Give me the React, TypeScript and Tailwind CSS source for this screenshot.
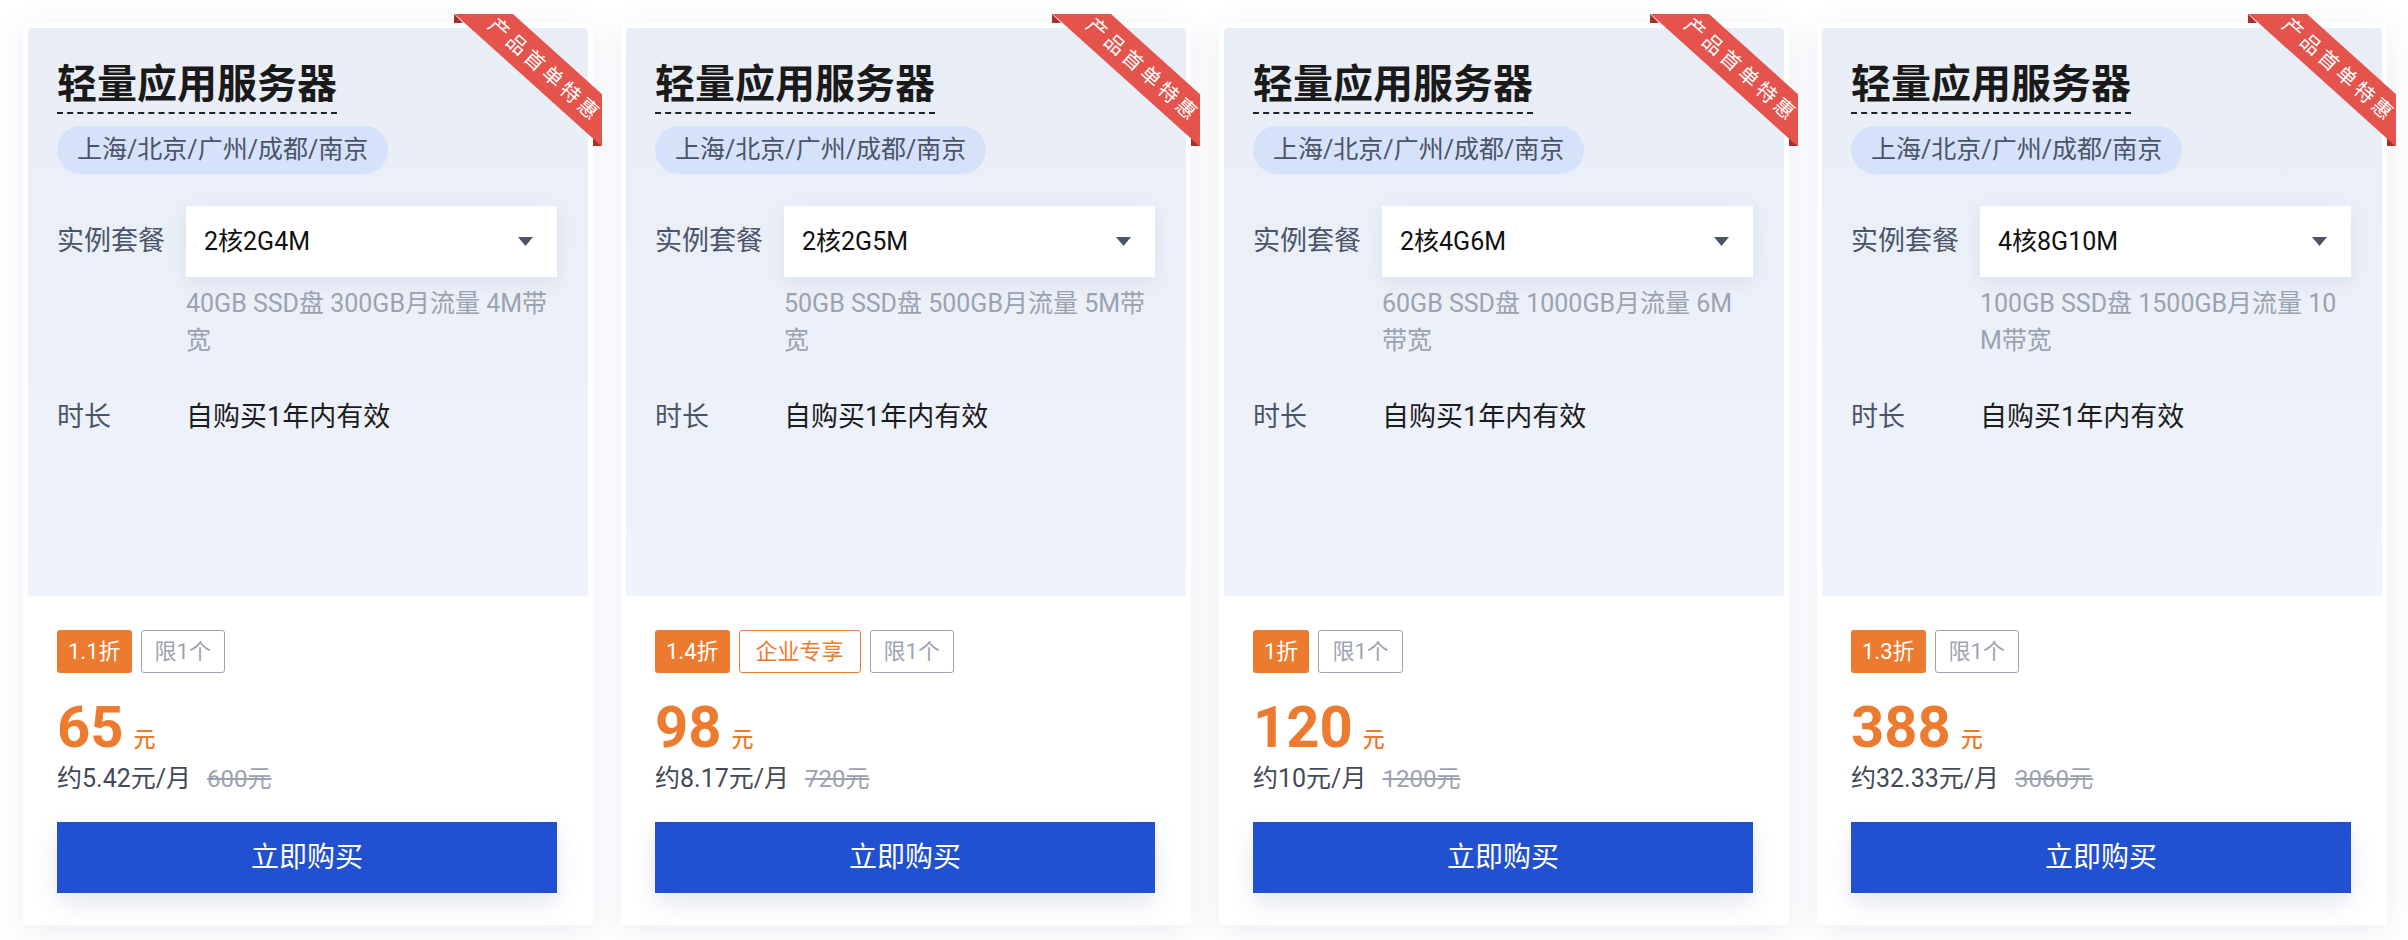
import React from 'react';

interface Plan {
  spec: string;
  desc: string[];
  discount: string;
  enterprise?: boolean;
  price: string;
  monthly: string;
  original: string;
}

const plans: Plan[] = [
  { spec: '2核2G4M', desc: ['40GB SSD盘 300GB月流量 4M带', '宽'], discount: '1.1折', price: '65', monthly: '约5.42元/月', original: '600元' },
  { spec: '2核2G5M', desc: ['50GB SSD盘 500GB月流量 5M带', '宽'], discount: '1.4折', enterprise: true, price: '98', monthly: '约8.17元/月', original: '720元' },
  { spec: '2核4G6M', desc: ['60GB SSD盘 1000GB月流量 6M', '带宽'], discount: '1折', price: '120', monthly: '约10元/月', original: '1200元' },
  { spec: '4核8G10M', desc: ['100GB SSD盘 1500GB月流量 10', 'M带宽'], discount: '1.3折', price: '388', monthly: '约32.33元/月', original: '3060元' },
];

function Ribbon() {
  return (
    <div className="pointer-events-none absolute -right-[14px] -top-[14px] h-[132px] w-[148px] overflow-hidden">
      <div className="absolute left-0 top-0 h-[9px] w-[9px] bg-[#a8302b] [clip-path:polygon(0_0,0_100%,100%_100%)]" />
      <div className="absolute bottom-0 right-0 h-[9px] w-[9px] bg-[#a8302b] [clip-path:polygon(0_0,100%_100%,0_100%)]" />
      <div className="absolute left-[-33px] top-[32px] flex h-[39px] w-[240px] rotate-[42deg] items-center justify-center bg-[#e4534c]">
        <span className="pl-[12px] text-[20px] leading-none tracking-[4px] text-white">产品首单特惠</span>
      </div>
    </div>
  );
}

function PlanCard({ plan }: { plan: Plan }) {
  return (
    <div className="flex w-[570px] shrink-0 flex-col bg-white px-[5px] pt-[5px] shadow-[0_6px_30px_rgba(31,56,120,0.09)]">
      <div className="relative h-[568px] rounded-t-[4px] bg-gradient-to-b from-[#e8edf6] to-[#eff3fb] pl-[29px] pr-[31px] pt-[33px]">
        <Ribbon />
        <div>
          <h2 className="inline-block border-b-2 border-dashed border-[#222] pb-[3px] text-[40px] font-bold leading-[48px] text-[#1a1a1a]">
            轻量应用服务器
          </h2>
        </div>
        <div className="mt-[12px]">
          <span className="inline-flex h-[48px] items-center rounded-full bg-[#d5e2fa] px-[20px] text-[25px] text-[#4a5468]">
            上海/北京/广州/成都/南京
          </span>
        </div>

        <div className="mt-[32px] flex">
          <div className="flex h-[71px] w-[129px] shrink-0 items-center text-[27px] text-[#4b5569]">实例套餐</div>
          <div className="flex-1">
            <div className="flex h-[71px] items-center justify-between bg-white pl-[18px] pr-[24px] text-[25px] text-[#111] shadow-[0_6px_18px_rgba(40,60,120,0.08)]">
              <span>{plan.spec}</span>
              <svg width="15" height="9" viewBox="0 0 15 9">
                <polygon points="0,0 15,0 7.5,9" fill="#4b5565" />
              </svg>
            </div>
            <div className="mt-[8px] text-[25px] leading-[37px] text-[#9ba2b0]">
              {plan.desc.map((line, i) => (
                <div key={i}>{line}</div>
              ))}
            </div>
          </div>
        </div>

        <div className="mt-[40px] flex text-[27px] leading-[36px]">
          <div className="w-[129px] shrink-0 text-[#4b5569]">时长</div>
          <div className="text-[#1c1c1c]">自购买1年内有效</div>
        </div>
      </div>

      <div className="pb-[32px] pl-[29px] pr-[31px] pt-[34px]">
        <div className="flex gap-[9px]">
          <span className="flex h-[43px] items-center rounded-[3px] bg-[#ed7b2f] px-[11px] text-[22px] text-white">{plan.discount}</span>
          {plan.enterprise && (
            <span className="flex h-[43px] items-center rounded-[3px] border-[1.5px] border-[#ed7b2f] px-[16px] text-[22px] text-[#ed7b2f]">
              企业专享
            </span>
          )}
          <span className="flex h-[43px] items-center rounded-[3px] border-[1.5px] border-[#9ca3b0] px-[13px] text-[22px] text-[#9ca3b0]">
            限1个
          </span>
        </div>
        <div className="mt-[25px] flex items-baseline text-[#ed7b2f]">
          <span className="text-[58px] font-bold leading-none">{plan.price}</span>
          <span className="ml-[10px] text-[22px] font-medium">元</span>
        </div>
        <div className="mt-[7px] flex items-baseline text-[25px] leading-[32px] text-[#434a57]">
          <span>{plan.monthly}</span>
          <span className="ml-[16px] text-[24px] text-[#9ca3af] line-through">{plan.original}</span>
        </div>
        <button className="mt-[27px] flex h-[71px] w-full items-center justify-center bg-[#2150d0] text-[28px] text-white shadow-[0_10px_24px_rgba(30,60,150,0.12)]">
          立即购买
        </button>
      </div>
    </div>
  );
}

export default function App() {
  return (
    <div className="min-h-[940px] bg-white pl-[23px] pt-[23px] font-[Roboto,'Noto_Sans_CJK_SC',sans-serif]">
      <div className="flex gap-[28px]">
        {plans.map((plan, i) => (
          <PlanCard key={i} plan={plan} />
        ))}
      </div>
    </div>
  );
}
